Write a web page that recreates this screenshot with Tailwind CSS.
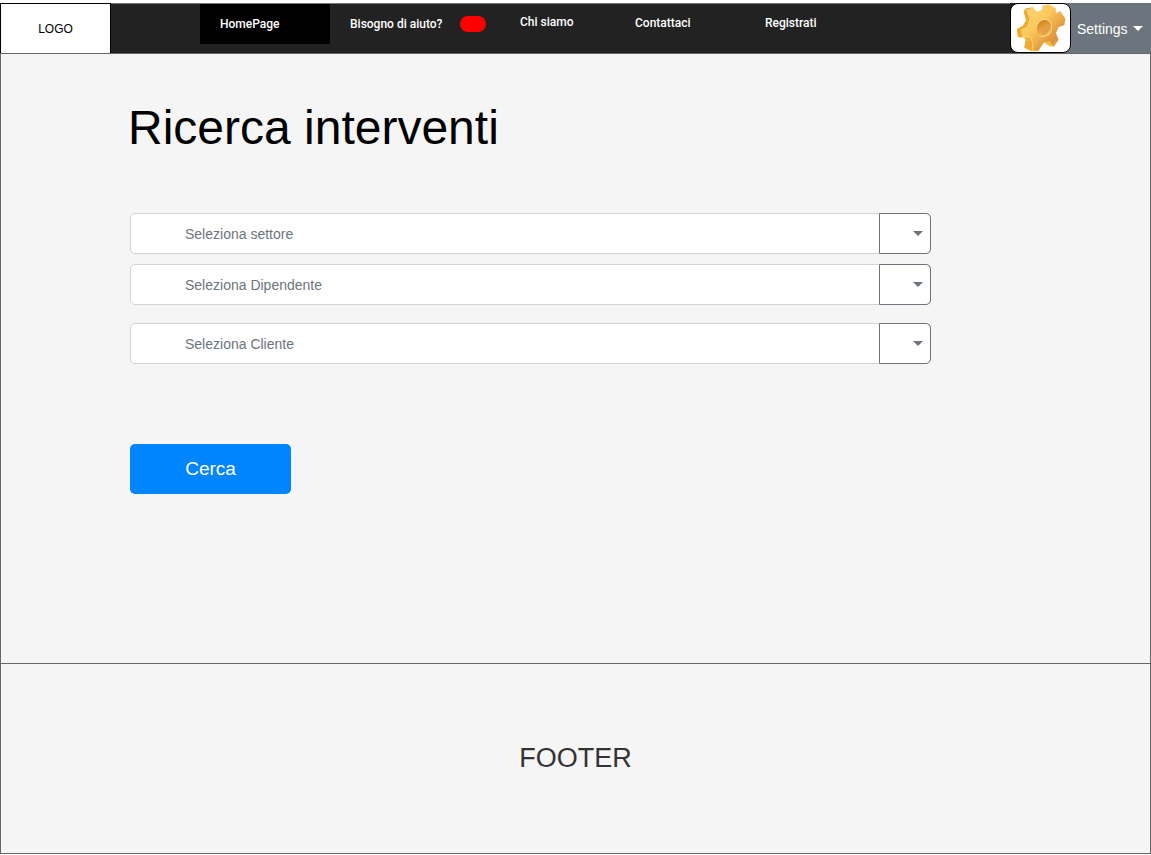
<!DOCTYPE html>
<html lang="it">
<head>
<meta charset="utf-8">
<meta name="viewport" content="width=device-width, initial-scale=1">
<title>Ricerca interventi</title>
<script src="https://cdn.jsdelivr.net/npm/@tailwindcss/browser@4"></script>
</head>
<body class="bg-white pt-[3px] text-black font-['Liberation_Sans',Arial,sans-serif]">
<header class="flex h-[50px] bg-[#222]">
  <a href="#" class="flex w-[111px] shrink-0 items-center justify-center border-x border-t border-black bg-white text-xs">LOGO</a>
  <nav class="flex flex-1 items-start border-t border-[#777] pl-[89px] text-xs font-medium text-white font-[Roboto,sans-serif]">
    <a href="#" class="flex h-10 w-[130px] items-center bg-black pl-5">HomePage</a>
    <a href="#" class="flex h-10 w-[190px] items-center gap-[18px] pl-5">Bisogno di aiuto?<span class="h-4 w-[26px] rounded-full bg-[#f00]"></span></a>
    <a href="#" class="flex h-9 w-[115px] items-center">Chi siamo</a>
    <a href="#" class="flex h-[38px] w-[130px] items-center">Contattaci</a>
    <a href="#" class="flex h-[38px] items-center">Registrati</a>
  </nav>
  <div class="flex shrink-0 bg-[#6c757d]">
    <div class="bg-[linear-gradient(to_right,#222_50%,#6c757d_50%)]">
      <div class="flex h-[50px] w-[61px] items-center justify-center rounded-lg border border-black bg-white">
        <svg class="h-[49px] w-[52px] shrink-0" viewBox="0 0 156 147" aria-hidden="true">
          <defs>
            <linearGradient id="face" x1="0" y1="0" x2="1" y2="1"><stop offset="0" stop-color="#fbd778"/><stop offset=".4" stop-color="#fbc95c"/><stop offset=".75" stop-color="#e0913a"/><stop offset="1" stop-color="#f6c45d"/></linearGradient>
            <linearGradient id="side" x1="0" y1="0" x2="1" y2="1"><stop offset="0" stop-color="#e59a1e"/><stop offset=".5" stop-color="#f5b32e"/><stop offset="1" stop-color="#fbc850"/></linearGradient>
            <linearGradient id="hole" x1="0" y1="0" x2="1" y2="1"><stop offset="0" stop-color="#c97718"/><stop offset=".65" stop-color="#f0b040"/><stop offset="1" stop-color="#fddc85"/></linearGradient>
          </defs>
          <path fill="url(#side)" d="M26 22L34 13L53 10L65 24L80 19L83 5L100 1L112 23L118 90L126 110L114 128L99 125L86 112L74 124L69 141L51 142L28 131L32 108L26 99L9 99L6 75L24 65L34 47Z"/>
          <path fill="url(#face)" d="M35 17L54 10L66 26L81 20L84 5L102 1L122 12L123 28L136 21L151 44L148 64L131 69L123 88L131 108L116 128L103 111L86 116L70 141L52 138L54 115L43 97L21 101L18 77L37 70L45 45Z"/>
          <path fill="#f0ab35" d="M6 75L18 77L21 101L9 99ZM28 131L32 109L54 115L52 138L51 142ZM26 22L35 17L45 45L36 60Z"/>
          <path fill="none" stroke="#ffe09a" stroke-width="2" d="M18 77L37 70L45 45L35 17M21 101L43 97L54 115L52 138M66 26L81 20L84 5"/>
          <ellipse cx="87" cy="72" rx="24" ry="28" transform="rotate(25 87 72)" fill="#ffe096"/>
          <ellipse cx="87" cy="73" rx="22" ry="26" transform="rotate(25 87 73)" fill="url(#hole)"/>
          <path fill="#e3a04c" d="M81 94C75 79 84 65 102 62C108 76 98 92 81 94Z"/>
        </svg>
      </div>
    </div>
    <button type="button" class="flex w-20 items-center gap-1 border-t border-[#6c757d] pl-[6px] text-sm text-white">Settings
      <svg class="ml-px h-[5px] w-[10px]" viewBox="0 0 10 5" fill="currentColor" aria-hidden="true"><path d="M0 0h10L5 5z"/></svg>
    </button>
  </div>
</header>
<main class="h-[610px] border-x border-t border-[#666] bg-[#f5f5f5] px-[129px] pt-[46px]">
  <h1 class="-ml-0.5 text-5xl leading-[56px]">Ricerca interventi</h1>
  <form class="mt-[57px] w-full max-w-[801px] text-sm text-[#6c757d]">
    <div class="relative">
      <select aria-label="Seleziona settore" class="block h-[41px] w-full appearance-none rounded-[5px] border border-[#ced4da] bg-white pl-[54px]"><option>Seleziona settore</option></select>
      <span class="pointer-events-none absolute inset-y-0 right-0 flex w-[52px] items-center justify-end rounded-r-[5px] border border-[#6c757d] pr-[7px]"><svg class="h-[5px] w-[10px]" viewBox="0 0 10 5" fill="currentColor" aria-hidden="true"><path d="M0 0h10L5 5z"/></svg></span>
    </div>
    <div class="relative mt-[10px]">
      <select aria-label="Seleziona Dipendente" class="block h-[41px] w-full appearance-none rounded-[5px] border border-[#ced4da] bg-white pl-[54px]"><option>Seleziona Dipendente</option></select>
      <span class="pointer-events-none absolute inset-y-0 right-0 flex w-[52px] items-center justify-end rounded-r-[5px] border border-[#6c757d] pr-[7px]"><svg class="h-[5px] w-[10px]" viewBox="0 0 10 5" fill="currentColor" aria-hidden="true"><path d="M0 0h10L5 5z"/></svg></span>
    </div>
    <div class="relative mt-[18px]">
      <select aria-label="Seleziona Cliente" class="block h-[41px] w-full appearance-none rounded-[5px] border border-[#ced4da] bg-white pl-[54px]"><option>Seleziona Cliente</option></select>
      <span class="pointer-events-none absolute inset-y-0 right-0 flex w-[52px] items-center justify-end rounded-r-[5px] border border-[#6c757d] pr-[7px]"><svg class="h-[5px] w-[10px]" viewBox="0 0 10 5" fill="currentColor" aria-hidden="true"><path d="M0 0h10L5 5z"/></svg></span>
    </div>
    <button type="submit" class="mt-20 h-[50px] w-[161px] rounded-[5px] bg-[#0085ff] text-[19px] text-white">Cerca</button>
  </form>
</main>
<footer class="flex h-[191px] items-center justify-center border border-[#666] bg-[#f5f5f5] text-[27px] text-[#333]">FOOTER</footer>
</body>
</html>
